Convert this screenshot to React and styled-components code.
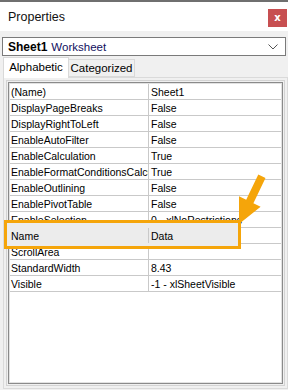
import React from 'react'
import styled, { createGlobalStyle } from 'styled-components'

const GlobalStyle = createGlobalStyle`
    html, body {
        margin: 0;
        padding: 0;
        background: #f0f0f0;
    }
    *, *::before, *::after {
        box-sizing: border-box;
    }
`

const Window = styled.div`
    position: relative;
    width: 288px;
    height: 390px;
    display: flex;
    flex-direction: column;
    background: #f0f0f0;
    border-top: 2px solid #6f6f6f;
    font-family: "Liberation Sans", Arial, sans-serif;
    color: #000;
`

const TitleBar = styled.div`
    display: flex;
    justify-content: space-between;
    align-items: center;
    height: 29px;
    padding-left: 8px;
    padding-right: 1px;
    background: #ffffff;
`

const Title = styled.span`
    font-size: 12.5px;
    color: #111;
`

const CloseButton = styled.div`
    width: 19px;
    height: 18px;
    margin-top: 2px;
    display: flex;
    align-items: center;
    justify-content: center;
    background: #c74f51;
    color: #fff;
    font-size: 10px;
    font-weight: 700;
    font-family: "DejaVu Sans", sans-serif;
`

const Combo = styled.div`
    display: flex;
    align-items: center;
    height: 19px;
    margin: 6px 2px 0 2px;
    padding-left: 5px;
    padding-right: 7px;
    background: #fff;
    border: 1px solid #7a7a7a;
    font-size: 11.5px;
`

const ComboBold = styled.b`
    font-weight: 700;
    font-size: 12px;
    margin-right: 4px;
`

const ComboText = styled.span`
    flex: 1;
    color: #101060;
`

const TabStrip = styled.div`
    display: flex;
    align-items: flex-end;
    height: 21px;
    padding-left: 3px;
    position: relative;
    z-index: 1;
`

const Tab = styled.div`
    display: flex;
    align-items: center;
    justify-content: center;
    width: 66px;
    height: ${p => (p.$active ? 21 : 18)}px;
    margin-bottom: ${p => (p.$active ? -1 : 0)}px;
    background: ${p => (p.$active ? '#ffffff' : '#f0f0f0')};
    border: 1px solid #d9d9d9;
    border-bottom: ${p => (p.$active ? 'none' : '1px solid #d9d9d9')};
    border-left: ${p => (p.$active ? '1px solid #d9d9d9' : 'none')};
    font-size: 11.5px;
    padding-bottom: ${p => (p.$active ? 2 : 0)}px;
`

const TabPage = styled.div`
    flex: 1;
    margin: 0 0 1px 3px;
    padding: 2px;
    border: 1px solid #dadada;
    background: #f0f0f0;
    display: flex;
`

const GridOuter = styled.div`
    flex: 1;
    display: flex;
    padding: 1px;
    border: 1px solid #d3d3d3;
    background: #f0f0f0;
`

const GridInner = styled.div`
    flex: 1;
    padding: 1px;
    border: 1px solid #8a8a8a;
    box-shadow: inset 0 0 0 1px #e2e2e2;
    background: #fff;
`

const Row = styled.div`
    display: grid;
    grid-template-columns: 139px 1fr;
    height: 16px;
    border-bottom: 1px solid #c9c9c9;
    font-size: 10.5px;
    line-height: 16px;
    ${p => p.$marked && `
        position: relative;
        z-index: 1;
        &::before {
            content: '';
            position: absolute;
            left: -6px;
            top: -8px;
            width: 237px;
            height: 29px;
            border: 3px solid #f5a50a;
            background: #ececec;
            z-index: -1;
        }
    `}
`

const NameCell = styled.div`
    padding-left: 1px;
    border-right: 1px solid #c9c9c9;
    white-space: nowrap;
    overflow: hidden;
`

const ValueCell = styled.div`
    padding-left: 2px;
    white-space: nowrap;
    overflow: hidden;
`

const Arrow = styled.svg`
    position: absolute;
    left: 0;
    top: 0;
    pointer-events: none;
`

const props = [
    ['(Name)', 'Sheet1'],
    ['DisplayPageBreaks', 'False'],
    ['DisplayRightToLeft', 'False'],
    ['EnableAutoFilter', 'False'],
    ['EnableCalculation', 'True'],
    ['EnableFormatConditionsCalculation', 'True'],
    ['EnableOutlining', 'False'],
    ['EnablePivotTable', 'False'],
    ['EnableSelection', '0 - xlNoRestrictions'],
    ['Name', 'Data', true],
    ['ScrollArea', ''],
    ['StandardWidth', '8.43'],
    ['Visible', '-1 - xlSheetVisible'],
]

function App() {
    return (
        <>
            <GlobalStyle />
            <Window>
                <TitleBar>
                    <Title>Properties</Title>
                    <CloseButton>x</CloseButton>
                </TitleBar>

                <Combo>
                    <ComboBold>Sheet1</ComboBold>
                    <ComboText>Worksheet</ComboText>
                    <svg width="10" height="6" viewBox="0 0 10 6">
                        <path d="M0.5 0.5 L5 5 L9.5 0.5" fill="none" stroke="#555" strokeWidth="1" />
                    </svg>
                </Combo>

                <TabStrip>
                    <Tab $active>Alphabetic</Tab>
                    <Tab>Categorized</Tab>
                </TabStrip>

                <TabPage>
                    <GridOuter>
                        <GridInner>
                            {props.map(([name, value, marked]) => (
                                <Row key={name} $marked={marked}>
                                    <NameCell>{name}</NameCell>
                                    <ValueCell>{value}</ValueCell>
                                </Row>
                            ))}
                        </GridInner>
                    </GridOuter>
                </TabPage>

                <Arrow width="288" height="390" viewBox="0 0 288 390">
                    <polygon
                        points="258.3,172.6 265.5,176 253.4,201.2 260.6,204.7 239,222 239,194.3 246.2,197.8"
                        fill="#f5a50a"
                    />
                </Arrow>
            </Window>
        </>
    )
}

export default App
